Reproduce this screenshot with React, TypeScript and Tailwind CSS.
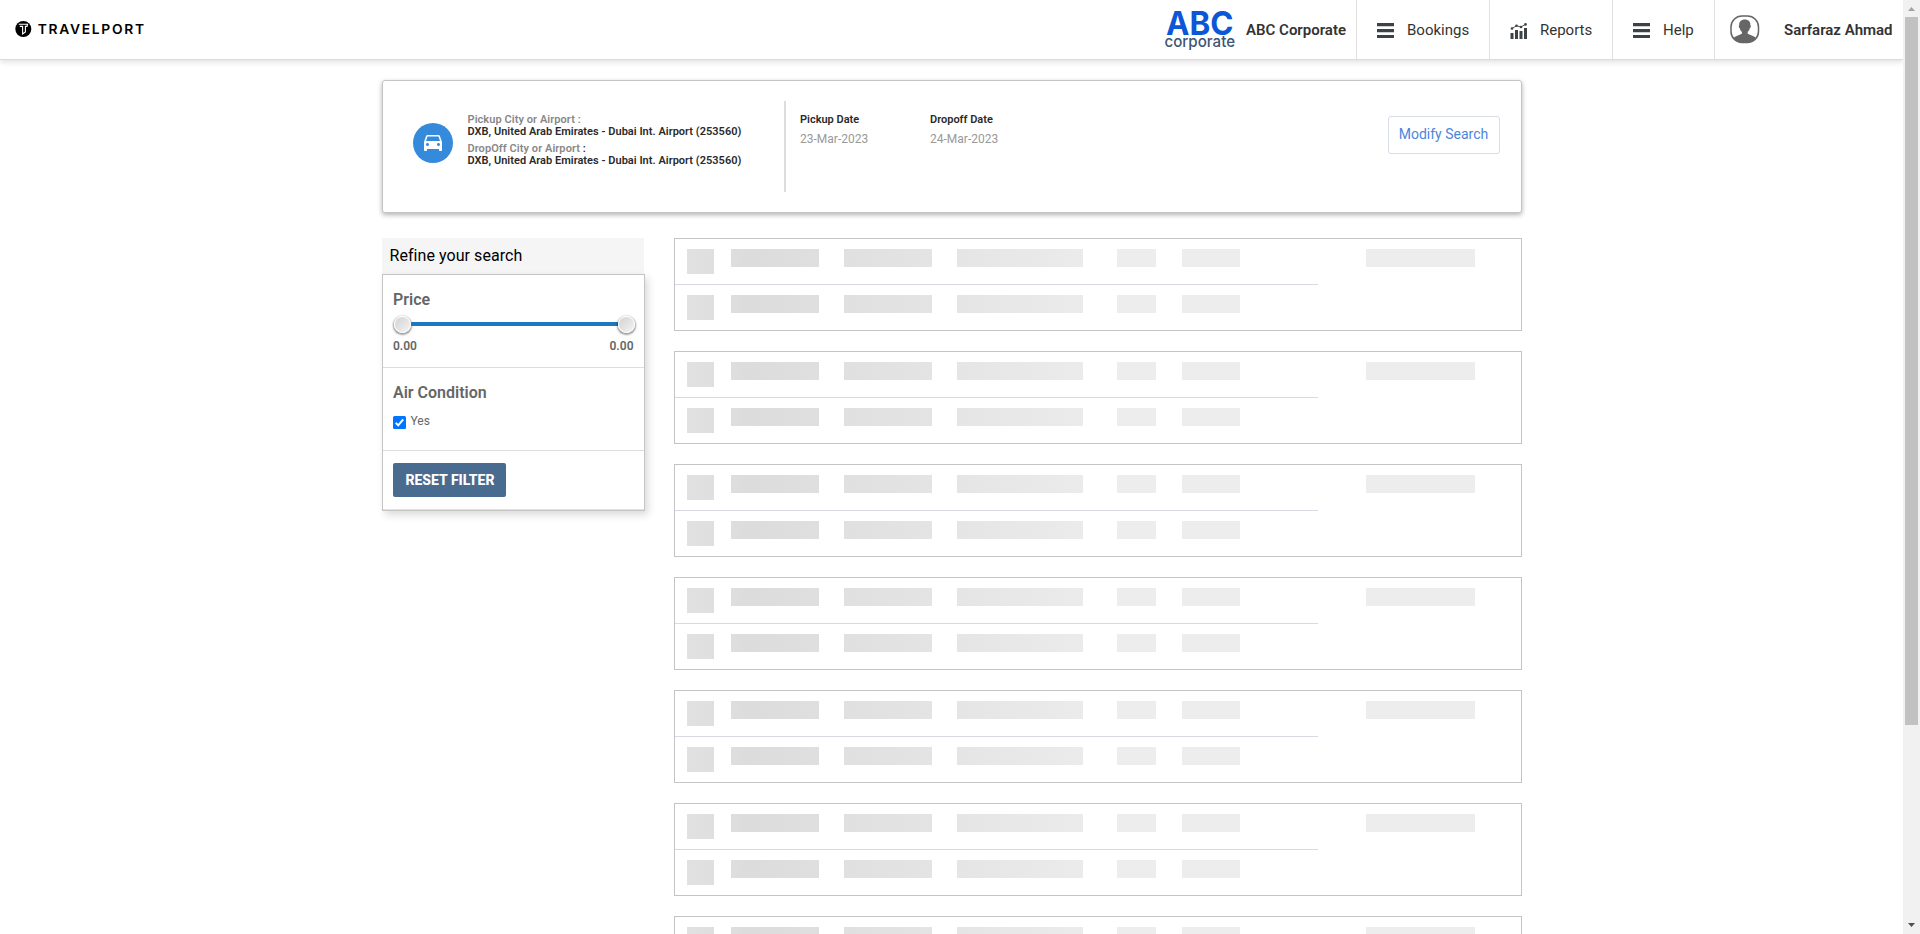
import React from "react";

function TravelportLogo() {
  return (
    <svg className="ml-[15px] h-5 w-[134px]" viewBox="0 0 134 20">
      <circle cx="8.3" cy="10" r="8" fill="#000" />
      <path d="M3.800 5.200H12.600L12 7.400H10.400V13L7.600 15V7.400H4.800" fill="none" stroke="#fff" strokeWidth="1.100" />
      <text x="22.800" y="14.600" fontFamily="Inter, sans-serif" fontWeight="600" fontSize="13" letterSpacing="1.600" textLength="108" lengthAdjust="spacingAndGlyphs" fill="#000">TRAVELPORT</text>
    </svg>
  );
}

function CompanyLogo() {
  return (
    <svg className="h-[59px] w-[76px]" viewBox="0 0 76 59">
      <text x="4" y="35" fontFamily="Inter, sans-serif" fontWeight="700" fontSize="33" textLength="67.500" lengthAdjust="spacingAndGlyphs" fill="#0b57d8">ABC</text>
      <text x="2.500" y="46.500" fontFamily="Inter, sans-serif" fontWeight="500" fontSize="16" textLength="70.500" lengthAdjust="spacingAndGlyphs" fill="#3d5577">corporate</text>
    </svg>
  );
}

function BarsIcon() {
  return (
    <svg className="mt-[2px] h-[15px] w-[17px] shrink-0" viewBox="0 0 17 15" fill="#3c4245">
      <path d="M0 0H17V3.300H0ZM0 6H17V9.300H0ZM0 12H17V15H0Z" />
    </svg>
  );
}

function ChartIcon() {
  return (
    <svg className="mt-[3px] h-4 w-[18px] shrink-0" viewBox="0 0 18 16" fill="#3c4245">
      <path d="M0.500 10H3.500V16H0.500ZM5 7H8V16H5ZM9.500 8H12.500V16H9.500ZM14 5H17V16H14Z" />
      <path d="M2 5.500L6.500 2.700L11 4L15.500 1.300" fill="none" stroke="#3c4245" strokeWidth="0.900" />
      <circle cx="2" cy="5.500" r="1.300" />
      <circle cx="6.500" cy="2.700" r="1.300" />
      <circle cx="11" cy="4" r="1.300" />
      <circle cx="15.500" cy="1.400" r="1.300" />
    </svg>
  );
}

function UserIcon() {
  return (
    <svg className="h-[29px] w-[30px] shrink-0" viewBox="0 0 30 29">
      <rect x="1" y="1" width="27.500" height="26.500" rx="11" fill="#fff" stroke="#666" strokeWidth="1.500" />
      <path d="M14.800 4.500C18.500 4.500 20.600 6.800 20.400 10.200C21.300 10.600 20.700 12.800 19.800 13.200C19.400 15 18.700 16 17.700 16.800V18.800C20.500 20.600 24.500 20.700 26 23.200C23.300 26.700 20.500 27.500 17.500 27.500H12C9 27.500 6 26.500 3.700 23.200C5.200 20.700 9 20.600 11.900 18.800V16.800C10.900 16 10.200 15 9.800 13.200C8.900 12.800 8.300 10.600 9.200 10.200C9 6.800 11.100 4.500 14.800 4.500Z" fill="#666" />
    </svg>
  );
}

function CarIcon() {
  return (
    <svg className="h-6 w-6" viewBox="0 0 24 24" fill="#fff">
      <path d="M18.920 5.010C18.720 4.420 18.160 4 17.500 4h-11c-.66 0-1.210.42-1.420 1.010L3 11v8c0 .55.45 1 1 1h1c.55 0 1-.45 1-1v-1h12v1c0 .55.45 1 1 1h1c.55 0 1-.45 1-1v-8l-2.080-5.990zM6.500 15c-.83 0-1.500-.67-1.500-1.500S5.670 12 6.500 12s1.500.67 1.500 1.500S7.330 15 6.500 15zm11 0c-.83 0-1.500-.67-1.500-1.500s.67-1.500 1.500-1.500 1.500.67 1.500 1.500-.67 1.500-1.500 1.500zM5 10l1.500-4.500h11L19 10H5z" />
    </svg>
  );
}

function Header() {
  return (
    <header className="flex h-[60px] shrink-0 items-stretch justify-between border-b border-[#dcdcdc] bg-white text-[15px] text-[#333] shadow-[0_2px_6px_rgba(0,0,0,0.13)]">
      <div className="flex items-center pb-0.5">
        <TravelportLogo />
      </div>
      <div className="flex items-stretch">
        <CompanyLogo />
        <div className="flex w-[118px] items-center pt-px pl-2 font-semibold whitespace-nowrap">ABC Corporate</div>
        <div className="flex w-[133px] items-center gap-[13px] border-l border-[#e0e0e0] pl-5">
          <BarsIcon />
          <span className="pt-px">Bookings</span>
        </div>
        <div className="flex w-[123px] items-center gap-3 border-l border-[#e0e0e0] pl-5">
          <ChartIcon />
          <span className="pt-px">Reports</span>
        </div>
        <div className="flex w-[102px] items-center gap-[13px] border-l border-[#e0e0e0] pl-5">
          <BarsIcon />
          <span className="pt-px">Help</span>
        </div>
        <div className="flex w-[189px] items-center gap-6 border-l border-[#e0e0e0] pl-[15px] font-semibold whitespace-nowrap">
          <UserIcon />
          <span className="pt-px">Sarfaraz Ahmad</span>
        </div>
      </div>
    </header>
  );
}

function SearchSummary() {
  return (
    <section className="flex h-[133px] rounded-[3px] border border-[#c4c4c4] bg-white shadow-[0_2px_5px_rgba(0,0,0,0.3)]">
      <div className="mt-[42px] ml-[30px] flex h-10 w-10 items-center justify-center rounded-full bg-[#368adb]">
        <CarIcon />
      </div>
      <div className="mt-[33px] ml-[15px] w-[316px] text-[11px] leading-3 font-semibold tracking-[0.025px] text-[#2a2a2a]">
        <p className="tracking-[0.070px] text-[#888]">Pickup City or Airport :</p>
        <p>DXB, United Arab Emirates - Dubai Int. Airport (253560)</p>
        <p className="mt-[5px] tracking-[0.070px]"><span className="text-[#888]">DropOff City or Airport</span> :</p>
        <p>DXB, United Arab Emirates - Dubai Int. Airport (253560)</p>
      </div>
      <div className="mt-5 h-[91px] w-0.5 bg-[#dcdcdc]" />
      <div className="mt-[33px] ml-3.5 w-[130px] pl-[0.500px]">
        <p className="text-[11px] leading-3 font-semibold text-[#2a2a2a]">Pickup Date</p>
        <p className="mt-1.5 text-xs leading-[14px] text-[#999]">23-Mar-2023</p>
      </div>
      <div className="mt-[33px] pl-[0.500px]">
        <p className="text-[11px] leading-3 font-semibold text-[#2a2a2a]">Dropoff Date</p>
        <p className="mt-1.5 text-xs leading-[14px] text-[#999]">24-Mar-2023</p>
      </div>
      <button className="mt-[35px] mr-[21px] ml-auto h-[38px] w-28 rounded-[3px] border border-[#d8dde6] pb-0.5 text-[14px] text-[#4c86dc]">Modify Search</button>
    </section>
  );
}

function Knob() {
  return (
    <span className="h-[17px] w-[17px] rounded-full border border-white bg-linear-to-br from-[#d2d2d2] to-[#f4f4f4] shadow-[0_1px_2px_1px_rgba(0,0,0,0.4)]" />
  );
}

function Filters() {
  return (
    <aside className="w-[263px] text-[#666]">
      <h2 className="mr-px h-9 bg-[#f5f5f5] pl-2 text-base leading-[35px] tracking-[0.06px] text-black">Refine your search</h2>
      <div className="h-[237px] border border-[#c4c4c4] bg-white shadow-[3px_4px_8px_rgba(0,0,0,0.15)]">
        <div className="h-[93px] border-b border-[#ddd] px-2.5 pt-[15px]">
          <h3 className="pl-[0.500px] text-base leading-5 font-semibold">Price</h3>
          <div className="mt-1.5 mr-[-1px] flex items-center pl-px">
            <Knob />
            <div className="mt-[-2px] h-1 flex-1 bg-[#1e78c0]" />
            <Knob />
          </div>
          <div className="mt-[5px] flex justify-between text-xs font-semibold">
            <span className="pl-[0.500px]">0.00</span>
            <span>0.00</span>
          </div>
        </div>
        <div className="h-[83px] border-b border-[#ddd] px-2.5 pt-[15px]">
          <h3 className="pl-[0.500px] text-base leading-5 font-semibold">Air Condition</h3>
          <div className="mt-2.5 flex gap-[5px]">
            <svg className="mt-[3px] h-[13px] w-[13px]" viewBox="0 0 13 13">
              <rect width="13" height="13" rx="1.500" fill="#0075ff" />
              <path d="M2.700 6.900L5.200 9.300L10.200 3.300" fill="none" stroke="#fff" strokeWidth="2" />
            </svg>
            <span className="text-xs leading-4">Yes</span>
          </div>
        </div>
        <div className="h-[59px] border-b border-[#e3e3e3] px-2.5 pt-3">
          <button className="h-[34px] w-[113px] rounded-[2px] bg-[#4a6b90] pl-0.5 text-sm font-extrabold whitespace-nowrap text-white">RESET FILTER</button>
        </div>
      </div>
    </aside>
  );
}

function SkeletonRow() {
  return (
    <div className="flex h-[45px] pt-2.5 pl-3">
      <div className="h-[25px] w-[27px] bg-linear-to-r from-[#e1e1e1] to-[#dfdfdf]" />
      <div className="ml-[17px] h-[18px] w-[88px] bg-linear-to-r from-[#dedede] via-[#dcdcdc] via-20% to-[#dfdfdf]" />
      <div className="ml-[25px] h-[18px] w-[88px] bg-linear-to-r from-[#e0e0e0] to-[#e4e4e4]" />
      <div className="ml-[25px] h-[18px] w-[126px] bg-linear-to-r from-[#e5e5e5] to-[#ebebeb]" />
      <div className="ml-[34px] h-[18px] w-[39px] bg-[#ededed]" />
      <div className="ml-[26px] h-[18px] w-[58px] bg-[#ededed]" />
    </div>
  );
}

function SkeletonCard() {
  return (
    <div className="flex h-[93px] shrink-0 border border-[#c4c4c4] bg-white">
      <div className="w-[643px]">
        <SkeletonRow />
        <div className="h-px bg-[#d9d9e6]" />
        <SkeletonRow />
      </div>
      <div className="mt-2.5 ml-12 h-[18px] w-[109px] bg-[#ededed]" />
    </div>
  );
}

function Scrollbar() {
  return (
    <div className="flex w-[17px] shrink-0 flex-col items-center bg-[#f1f1f1]">
      <svg className="h-[17px] w-[17px]" viewBox="0 0 17 17"><path d="M5 11H12L8.500 7Z" fill="#a3a3a3" /></svg>
      <div className="h-[708px] w-[13px] bg-[#c1c1c1]" />
      <svg className="mt-auto h-[17px] w-[17px]" viewBox="0 0 17 17"><path d="M5 6H12L8.500 10Z" fill="#505050" /></svg>
    </div>
  );
}

export default function App() {
  return (
    <div className="flex h-[934px] overflow-hidden bg-white font-['Roboto',sans-serif]">
      <div className="flex min-w-0 flex-1 flex-col overflow-hidden">
        <Header />
        <main className="mx-auto mt-5 w-[1140px]">
          <SearchSummary />
          <div className="mt-[25px] flex items-start justify-between">
            <Filters />
            <div className="flex w-[848px] flex-col gap-5">
              {Array.from({ length: 7 }, (_, i) => (
                <SkeletonCard key={i} />
              ))}
            </div>
          </div>
        </main>
      </div>
      <Scrollbar />
    </div>
  );
}
